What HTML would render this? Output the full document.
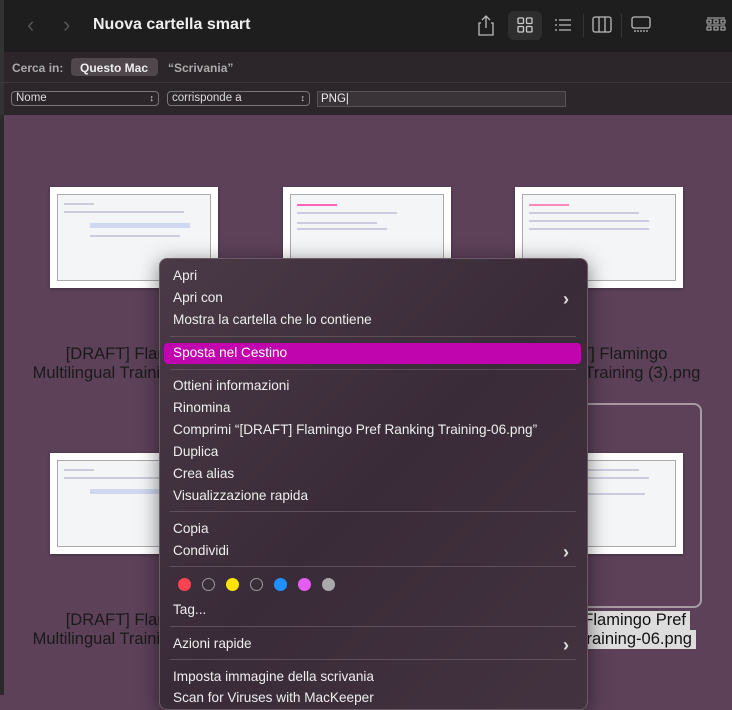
<!DOCTYPE html><html><head><style>
body{margin:0;width:732px;height:695px;overflow:hidden;font-family:"Liberation Sans",sans-serif;background:#5c4159;position:relative}
.a{position:absolute}
.tb{left:0;top:0;width:732px;height:52px;background:#1f1e1f;border-left:4px solid #333}
.sb{left:0;top:52px;width:732px;height:63px;background:#2c2529;border-left:4px solid #333;box-sizing:border-box}
.thumb{background:#fff;width:168px;height:101px;box-shadow:0 1px 3px rgba(0,0,0,.3)}
.thumb div{position:absolute;left:7px;top:7px;right:7px;bottom:7px;border:1px solid #aaa;background:#f4f5f7}
.thumb i{position:absolute;height:2px;background:#ccd;left:14px}
.lbl{color:#1a1a1a;font-size:16.5px;text-align:center;line-height:19px;width:260px;white-space:nowrap}
.menu{left:159px;top:258px;width:427px;height:450px;background:linear-gradient(135deg,#4a3a47,#3a2b38 50%,#433340);border:1px solid #6a5a66;border-radius:8px;box-shadow:0 4px 20px rgba(0,0,0,.5)}
.mi{position:absolute;left:13px;color:#eee;font-size:13.6px}
.sep{position:absolute;left:10px;width:406px;height:1px;background:#5e505a}
.arr{position:absolute;left:403px;color:#ddd;font-size:18px;font-weight:bold;line-height:16px}
.dot{position:absolute;top:319px;width:13px;height:13px;border-radius:50%}
.sel{position:absolute;right:0;background:#ddd;color:#111;font-size:16.5px;line-height:19px;padding:0 4px;white-space:nowrap}
</style></head><body>
<div class="a tb"></div>
<div class="a" style="left:27px;top:12px;color:#555;font-size:22px">&#x2039;</div>
<div class="a" style="left:63px;top:12px;color:#555;font-size:22px">&#x203A;</div>
<div class="a" style="left:93px;top:16px;color:#eee;font-size:16px;font-weight:bold">Nuova cartella smart</div>
<svg class="a" style="left:478px;top:14px" width="16" height="22"><path d="M3 9H1v12h14V9h-2M8 2v12M4 6l4-4 4 4" stroke="#bbb" fill="none" stroke-width="1.3"/></svg>
<div class="a" style="left:508px;top:11px;width:34px;height:29px;background:#2e2e2e;border-radius:6px"></div>
<svg class="a" style="left:517px;top:17px" width="16" height="16"><g fill="none" stroke="#ccc" stroke-width="1.3"><rect x="1" y="1" width="5.5" height="5.5" rx="1"/><rect x="9.5" y="1" width="5.5" height="5.5" rx="1"/><rect x="1" y="9.5" width="5.5" height="5.5" rx="1"/><rect x="9.5" y="9.5" width="5.5" height="5.5" rx="1"/></g></svg>
<svg class="a" style="left:554px;top:17px" width="18" height="16"><g stroke="#bbb" stroke-width="1.3"><path d="M5 3h12M5 8h12M5 13h12M1 3h2M1 8h2M1 13h2"/></g></svg>
<div class="a" style="left:583px;top:14px;width:1px;height:24px;background:#333"></div>
<svg class="a" style="left:592px;top:16px" width="20" height="18"><g fill="none" stroke="#bbb" stroke-width="1.3"><rect x="1" y="1" width="18" height="15" rx="2"/><path d="M7 1v15M13 1v15"/></g></svg>
<div class="a" style="left:621px;top:14px;width:1px;height:24px;background:#333"></div>
<svg class="a" style="left:631px;top:16px" width="20" height="18"><g fill="none" stroke="#bbb" stroke-width="1.3"><rect x="1" y="1" width="18" height="11" rx="2"/><path d="M3 15h14" stroke-dasharray="2 1"/></g></svg>
<svg class="a" style="left:706px;top:16px" width="20" height="18"><g fill="none" stroke="#bbb" stroke-width="1"><path d="M1 2h18M1 9h18"/><rect x="1" y="4" width="4" height="3"/><rect x="8" y="4" width="4" height="3"/><rect x="15" y="4" width="4" height="3"/><rect x="1" y="11" width="4" height="3"/><rect x="8" y="11" width="4" height="3"/><rect x="15" y="11" width="4" height="3"/></g></svg>
<div class="a sb"></div>
<div class="a" style="left:0;top:82px;width:732px;height:1px;background:#3e363b"></div>
<div class="a" style="left:12px;top:61px;color:#aaa;font-size:12px;font-weight:bold">Cerca in:</div>
<div class="a" style="left:71px;top:58px;width:87px;height:18px;background:#4f474c;border-radius:4px"></div>
<div class="a" style="left:80px;top:61px;color:#eee;font-size:12px;font-weight:bold">Questo Mac</div>
<div class="a" style="left:168px;top:61px;color:#aaa;font-size:12px;font-weight:bold">“Scrivania”</div>
<div class="a" style="left:11px;top:91px;width:148px;height:15px;border:1px solid #777;border-radius:4px;color:#ddd;font-size:11.5px;box-sizing:border-box;padding:0 4px;line-height:13px">Nome<span style="float:right;font-size:9px">&#x2195;</span></div>
<div class="a" style="left:167px;top:91px;width:143px;height:15px;border:1px solid #777;border-radius:4px;color:#ddd;font-size:11.5px;box-sizing:border-box;padding:0 4px;line-height:13px">corrisponde a<span style="float:right;font-size:9px">&#x2195;</span></div>
<div class="a" style="left:317px;top:91px;width:249px;height:16px;background:#3a3438;border:1px solid #555;box-sizing:border-box;color:#eee;font-size:11.5px;padding-left:3px;line-height:14px">PNG|</div>
<div class="a" style="left:0;top:115px;width:4px;height:580px;background:#2a2a2a"></div>
<div class="a thumb" style="left:50px;top:187px"><div></div><i style="top:16px;width:30px"></i><i style="top:24px;width:120px"></i><i style="top:36px;width:100px;height:5px;left:40px;background:#cfd8f0"></i><i style="top:48px;width:90px;left:40px"></i></div>
<div class="a thumb" style="left:283px;top:187px"><div></div><i style="top:17px;width:40px;background:#f6b"></i><i style="top:25px;width:100px"></i><i style="top:35px;width:80px"></i><i style="top:41px;width:90px"></i></div>
<div class="a thumb" style="left:515px;top:187px"><div></div><i style="top:17px;width:40px;background:#f8b"></i><i style="top:25px;width:110px"></i><i style="top:33px;width:120px"></i><i style="top:41px;width:120px"></i></div>
<div class="a thumb" style="left:50px;top:453px"><div></div><i style="top:16px;width:30px"></i><i style="top:24px;width:120px"></i><i style="top:36px;width:100px;height:5px;left:40px;background:#cfd8f0"></i></div>
<div class="a thumb" style="left:515px;top:453px"><div></div><i style="top:16px;width:110px"></i><i style="top:24px;width:120px"></i><i style="top:40px;width:90px;left:40px"></i></div>
<div class="a" style="left:540px;top:403px;width:162px;height:205px;border:2px solid #a89aa4;border-radius:8px;box-sizing:border-box"></div>
<div class="a lbl" style="left:4px;top:345px">[DRAFT] Flamingo<br>Multilingual Training (2).png</div>
<div class="a lbl" style="left:469px;top:345px">[DRAFT] Flamingo<br>Multilingual Training (3).png</div>
<div class="a lbl" style="left:4px;top:611px">[DRAFT] Flamingo<br>Multilingual Training (4).png</div>
<div class="a" style="left:0;top:611px;width:690px;height:40px"><div class="sel" style="top:0">[DRAFT] Flamingo Pref</div></div>
<div class="a" style="left:0;top:630px;width:696px;height:20px"><div class="sel" style="top:0">Ranking Training-06.png</div></div>
<div class="a menu">
<div class="mi" style="top:9px">Apri</div>
<div class="mi" style="top:31px">Apri con</div><div class="arr" style="top:32px">&#x203A;</div>
<div class="mi" style="top:53px">Mostra la cartella che lo contiene</div>
<div class="sep" style="top:77px"></div>
<div style="position:absolute;left:4px;top:84px;width:417px;height:21px;background:#c005ae;border-radius:4px"></div>
<div class="mi" style="top:86px;color:#fff">Sposta nel Cestino</div>
<div class="sep" style="top:110px"></div>
<div class="mi" style="top:119px">Ottieni informazioni</div>
<div class="mi" style="top:141px">Rinomina</div>
<div class="mi" style="top:163px">Comprimi “[DRAFT] Flamingo Pref Ranking Training-06.png”</div>
<div class="mi" style="top:185px">Duplica</div>
<div class="mi" style="top:207px">Crea alias</div>
<div class="mi" style="top:229px">Visualizzazione rapida</div>
<div class="sep" style="top:252px"></div>
<div class="mi" style="top:262px">Copia</div>
<div class="mi" style="top:284px">Condividi</div><div class="arr" style="top:285px">&#x203A;</div>
<div class="sep" style="top:307px"></div>
<div class="dot" style="left:18px;background:#fd4350"></div>
<div class="dot" style="left:42px;border:1px solid #999;box-sizing:border-box"></div>
<div class="dot" style="left:66px;background:#fde300"></div>
<div class="dot" style="left:90px;border:1px solid #999;box-sizing:border-box"></div>
<div class="dot" style="left:114px;background:#1e90ff"></div>
<div class="dot" style="left:138px;background:#e35ef0"></div>
<div class="dot" style="left:162px;background:#a9a9ab"></div>
<div class="mi" style="top:343px">Tag...</div>
<div class="sep" style="top:367px"></div>
<div class="mi" style="top:377px">Azioni rapide</div><div class="arr" style="top:378px">&#x203A;</div>
<div class="sep" style="top:400px"></div>
<div class="mi" style="top:410px">Imposta immagine della scrivania</div>
<div class="mi" style="top:431px">Scan for Viruses with MacKeeper</div>
</div>
</body></html>
